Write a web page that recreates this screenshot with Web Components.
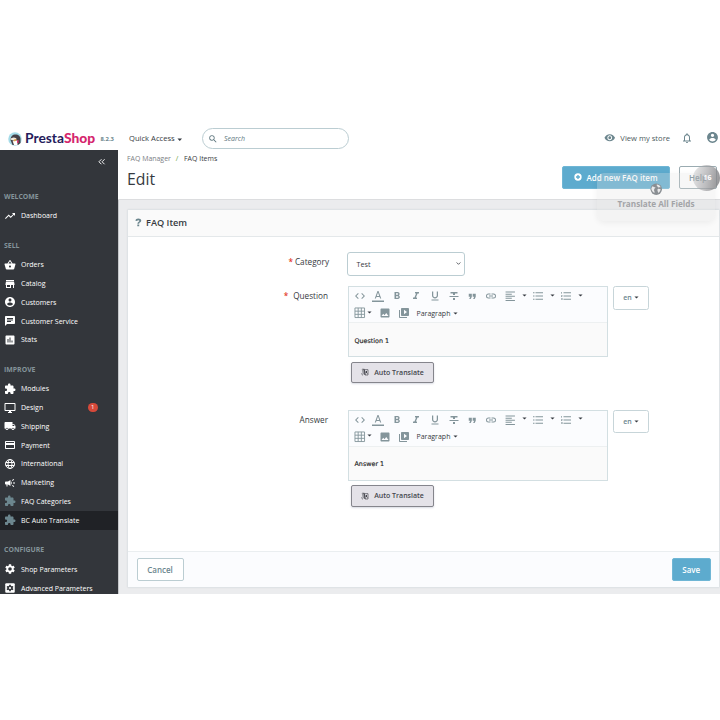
<!DOCTYPE html>
<html lang="en">
<head>
<meta charset="utf-8">
<title>Edit - PrestaShop</title>
<style>
  html, body { margin: 0; height: 100%; background: #fff; overflow: hidden; }
  body { font-family: "Open Sans", "Noto Sans", sans-serif; color: #363a41; }
</style>
</head>
<body>
<bo-app></bo-app>

<script>
const ICONS = {
  trend: '<path d="M16 6l2.29 2.29-4.88 4.88-4-4L2 16.59 3.41 18l6-6 4 4 6.3-6.29L22 12V6z"/>',
  basket: '<path d="M17.21 9l-4.38-6.56c-.19-.28-.51-.42-.83-.42-.32 0-.64.14-.83.43L6.79 9H2c-.55 0-1 .45-1 1 0 .09.01.18.04.27l2.54 9.27c.23.84 1 1.46 1.92 1.46h13c.92 0 1.69-.62 1.93-1.46l2.54-9.27L23 10c0-.55-.45-1-1-1h-4.79zM9 9l3-4.4L15 9H9zm3 8c-1.1 0-2-.9-2-2s.9-2 2-2 2 .9 2 2-.9 2-2 2z"/>',
  store: '<path d="M20 4H4v2h16V4zm1 10v-2l-1-5H4l-1 5v2h1v6h10v-6h4v6h2v-6h1zm-9 4H6v-4h6v4z"/>',
  account: '<path d="M12 2C6.48 2 2 6.48 2 12s4.48 10 10 10 10-4.48 10-10S17.52 2 12 2zm0 3c1.66 0 3 1.34 3 3s-1.34 3-3 3-3-1.34-3-3 1.34-3 3-3zm0 14.2c-2.5 0-4.71-1.28-6-3.22.03-1.99 4-3.08 6-3.08 1.99 0 5.97 1.09 6 3.08-1.29 1.94-3.5 3.22-6 3.22z"/>',
  chat: '<path d="M20 2H4c-1.1 0-1.99.9-1.99 2L2 22l4-4h14c1.1 0 2-.9 2-2V4c0-1.1-.9-2-2-2zM6 9h12v2H6V9zm8 5H6v-2h8v2zm4-6H6V6h12v2z"/>',
  stats: '<path d="M19 3H5c-1.1 0-2 .9-2 2v14c0 1.1.9 2 2 2h14c1.1 0 2-.9 2-2V5c0-1.1-.9-2-2-2zM9 17H7v-7h2v7zm4 0h-2V7h2v10zm4 0h-2v-4h2v4z"/>',
  module: '<path d="M20.5 11H19V7c0-1.1-.9-2-2-2h-4V3.5C13 2.12 11.88 1 10.5 1S8 2.12 8 3.5V5H4c-1.1 0-1.99.9-1.99 2v3.8H3.5c1.49 0 2.7 1.21 2.7 2.7s-1.21 2.7-2.7 2.7H2V20c0 1.1.9 2 2 2h3.8v-1.5c0-1.49 1.21-2.7 2.7-2.7 1.49 0 2.7 1.21 2.7 2.7V22H17c1.1 0 2-.9 2-2v-4h1.5c1.38 0 2.5-1.12 2.5-2.5S21.88 11 20.5 11z"/>',
  desktop: '<path d="M21 2H3c-1.1 0-2 .9-2 2v12c0 1.1.9 2 2 2h7v2H8v2h8v-2h-2v-2h7c1.1 0 2-.9 2-2V4c0-1.1-.9-2-2-2zm0 14H3V4h18v12z"/>',
  truck: '<path d="M20 8h-3V4H3c-1.1 0-2 .9-2 2v11h2c0 1.66 1.34 3 3 3s3-1.34 3-3h6c0 1.66 1.34 3 3 3s3-1.34 3-3h2v-5l-3-4zM6 18.5c-.83 0-1.5-.67-1.5-1.5s.67-1.5 1.5-1.5 1.5.67 1.5 1.5-.67 1.5-1.5 1.5zm13.5-9l1.96 2.5H17V9.5h2.5zm-1.5 9c-.83 0-1.5-.67-1.5-1.5s.67-1.5 1.5-1.5 1.5.67 1.5 1.5-.67 1.5-1.5 1.5z"/>',
  card: '<path d="M20 4H4c-1.11 0-1.99.89-1.99 2L2 18c0 1.11.89 2 2 2h16c1.11 0 2-.89 2-2V6c0-1.11-.89-2-2-2zm0 14H4v-6h16v6zm0-10H4V6h16v2z"/>',
  globe: '<g fill="none" stroke="currentColor" stroke-width="2"><circle cx="12" cy="12" r="9"/><ellipse cx="12" cy="12" rx="4" ry="9"/><path d="M3.5 9h17M3.5 15h17"/></g>',
  campaign: '<path d="M18 11v2h4v-2h-4zm-2 6.61c.96.71 2.21 1.65 3.2 2.39.4-.53.8-1.07 1.2-1.6-.99-.74-2.24-1.68-3.2-2.4-.4.54-.8 1.08-1.2 1.61zM20.4 5.6c-.4-.53-.8-1.07-1.2-1.6-.99.74-2.24 1.68-3.2 2.4.4.53.8 1.07 1.2 1.6.96-.72 2.21-1.65 3.2-2.4zM4 9c-1.1 0-2 .9-2 2v2c0 1.1.9 2 2 2h1v4h2v-4h1l5 3V6L8 9H4zm11.5 3c0-1.33-.58-2.53-1.5-3.35v6.69c.92-.81 1.5-2.01 1.5-3.34z"/>',
  gear: '<path d="M19.14 12.94c.04-.3.06-.61.06-.94s-.02-.64-.07-.94l2.03-1.58a.49.49 0 0 0 .12-.61l-1.92-3.32a.49.49 0 0 0-.59-.22l-2.39.96a7 7 0 0 0-1.62-.94l-.36-2.54a.48.48 0 0 0-.48-.41h-3.84a.47.47 0 0 0-.47.41l-.36 2.54c-.59.24-1.13.57-1.62.94l-2.39-.96a.48.48 0 0 0-.59.22L2.74 8.87a.47.47 0 0 0 .12.61l2.03 1.58a6 6 0 0 0-.02 1.88l-2.03 1.58a.49.49 0 0 0-.12.61l1.92 3.32c.12.22.37.29.59.22l2.39-.96c.5.38 1.03.7 1.62.94l.36 2.54c.05.24.24.41.48.41h3.84c.24 0 .44-.17.47-.41l.36-2.54a7 7 0 0 0 1.62-.94l2.39.96c.22.08.47 0 .59-.22l1.92-3.32a.47.47 0 0 0-.12-.61zM12 15.6a3.6 3.6 0 1 1 0-7.2 3.6 3.6 0 0 1 0 7.2z"/>',
  gearbox: '<rect x="2.5" y="2.500" width="19" height="19" rx="2"/><path fill="#33363b" d="M10.600 5.500h2.800l.5 2 1.600.9 2-.6 1.400 2.400-1.500 1.300v1l1.500 1.400-1.400 2.400-2-.6-1.600.9-.5 2h-2.800l-.5-2-1.600-.9-2 .6-1.400-2.400 1.500-1.400v-1L5.100 10.200l1.400-2.400 2 .6 1.600-.9z"/><circle cx="12" cy="12" r="2.200"/>',
  search: '<path d="M15.500 14h-.790l-.280-.270A6.470 6.470 0 0 0 16 9.500 6.500 6.500 0 1 0 9.500 16c1.610 0 3.090-.590 4.230-1.570l.270.280v.790l5 4.990L20.490 19l-4.990-5zm-6 0C7.010 14 5 11.990 5 9.500S7.010 5 9.500 5 14 7.010 14 9.500 11.990 14 9.500 14z"/>',
  eye: '<path d="M12 4.500C7 4.500 2.730 7.610 1 12c1.730 4.390 6 7.500 11 7.500s9.270-3.110 11-7.500c-1.730-4.390-6-7.500-11-7.500zM12 17c-2.760 0-5-2.240-5-5s2.240-5 5-5 5 2.240 5 5-2.240 5-5 5zm0-8c-1.660 0-3 1.340-3 3s1.340 3 3 3 3-1.340 3-3-1.340-3-3-3z"/>',
  bell: '<path d="M12 22c1.100 0 2-.9 2-2h-4c0 1.100.9 2 2 2zm6-6v-5c0-3.070-1.630-5.640-4.500-6.320V4c0-.830-.670-1.500-1.500-1.500s-1.500.670-1.500 1.500v.680C7.640 5.360 6 7.920 6 11v5l-2 2v1h16v-1l-2-2zm-2 1H8v-6c0-2.480 1.510-4.500 4-4.500s4 2.020 4 4.500v6z"/>',
  plus: '<path fill-rule="evenodd" d="M12 1a11 11 0 1 0 0 22 11 11 0 0 0 0-22zm-2 5h4v4h4v4h-4v4h-4v-4H6v-4h4z"/>',
  collapse: '<path fill="none" stroke="currentColor" stroke-width="3" d="M11 4l-8 8 8 8M21 4l-8 8 8 8"/>',
  code: '<path d="M9.400 16.600L4.800 12l4.600-4.600L8 6l-6 6 6 6 1.400-1.400zm5.200 0l4.600-4.600-4.600-4.600L16 6l6 6-6 6-1.400-1.400z"/>',
  color: '<path d="M0 21h24v2.800H0zM11 2L5.500 17h2.250l1.120-3h6.250l1.120 3h2.250L13 2h-2zm-1.380 10L12 5.200 14.380 12H9.620z"/>',
  bold: '<path d="M15.600 10.790c.970-.670 1.650-1.770 1.650-2.790 0-2.260-1.750-4-4-4H7v14h7.040c2.090 0 3.710-1.700 3.710-3.790 0-1.520-.860-2.820-2.150-3.420zM10 6.500h3c.830 0 1.500.670 1.500 1.500s-.670 1.500-1.500 1.500h-3v-3zm3.500 9H10v-3h3.500c.830 0 1.500.670 1.500 1.500s-.670 1.500-1.500 1.500z"/>',
  italic: '<path d="M10 4v3h2.210l-3.420 8H6v3h8v-3h-2.210l3.420-8H18V4z"/>',
  underline: '<path d="M12 17c3.310 0 6-2.690 6-6V3h-2.500v8c0 1.930-1.570 3.500-3.500 3.500S8.500 12.930 8.500 11V3H6v8c0 3.310 2.690 6 6 6zm-7 2v2h14v-2H5z"/>',
  strike: '<path d="M10 20h4v-4h-4v4zM5 4v3h5v3h4V7h5V4H5zM3 14.200h18v-2.200H3v2.200z"/>',
  quote: '<path d="M4 6h7v7l-2.500 5H5l2.500-5H4zM13 6h7v7l-2.500 5H14l2.500-5H13z"/>',
  link: '<path d="M3.900 12c0-1.710 1.390-3.100 3.100-3.100h4V7H7a5 5 0 0 0 0 10h4v-1.900H7c-1.710 0-3.100-1.390-3.100-3.100zM8 13h8v-2H8v2zm9-6h-4v1.900h4a3.100 3.100 0 0 1 0 6.200h-4V17h4a5 5 0 0 0 0-10z"/>',
  align: '<path d="M15 15H3v2h12v-2zm0-8H3v2h12V7zM3 13h18v-2H3v2zm0 8h18v-2H3v2zM3 3v2h18V3H3z"/>',
  ul: '<path d="M2 4.500h3v2H2zm0 6.500h3v2H2zm0 6.500h3v2H2zM7 4.500h15v2H7zM7 11h15v2H7zm0 6.500h15v2H7z"/>',
  ol: '<path d="M2 17h2v.5H3v1h1v.5H2v1h3v-4H2v1zm1-9h1V4H2v1h1v3zm-1 3h1.800L2 13.100v.9h3v-1H3.200L5 10.900V10H2v1zm5-6.500v2h15v-2H7zm0 15h15v-2H7v2zM7 13h15v-2H7v2z"/>',
  table: '<path fill="none" stroke="currentColor" stroke-width="1.900" d="M2 2h20v20H2zM2 8.700h20M2 15.300h20M8.700 2v20M15.300 2v20"/>',
  image: '<path d="M21 19V5c0-1.100-.9-2-2-2H5c-1.100 0-2 .9-2 2v14c0 1.100.9 2 2 2h14c1.100 0 2-.9 2-2zM8.500 13.500l2.500 3.010L14.500 12l4.500 6H5l3.500-4.500z"/>',
  video: '<path d="M4 6H2v14c0 1.100.9 2 2 2h14v-2H4V6zm16-4H8c-1.100 0-2 .9-2 2v12c0 1.100.9 2 2 2h12c1.100 0 2-.9 2-2V4c0-1.100-.9-2-2-2zm-8 12.500v-9l6 4.500-6 4.500z"/>',
  caret: '<path d="M2 7h20l-10 10z"/>',
  chevron: '<path fill="none" stroke="currentColor" stroke-width="3.800" d="M3 7l9 9 9-9"/>',
  help: '<path d="M4 7.500C4.500 3.500 7.500 1.500 12 1.500c5 0 8.500 2.500 8.500 6.500 0 5-6 4.500-6 8H9.500c0-5 5.500-5 5.500-7.800 0-1.400-1-2.200-2.800-2.200-2 0-3 1-3.500 2.500zM9.300 18h5.400v5H9.300z"/>',
  translate: '<path opacity=".45" d="M2 3l9-1 3 19-9-3z"/><path fill="none" stroke="currentColor" stroke-width="2" d="M10 5h11v16H12zM5 3l5 2 2 16M2 16c0 3 1 5 4 5"/><path d="M14 9h4v6h-4z"/><path fill="none" stroke="currentColor" stroke-width="1.500" d="M17 14l3 4"/>',
  earth: '<circle cx="12" cy="12" r="11"/><path fill="#e9e9ea" d="M4 6.500c3 0 4 1.500 6.500 1.500-.5 2-3 2.500-2.500 5-1 2 1.500 3 .5 6C5.500 17.500 3 14 2.500 11zM13 3c3.500 0 6 2 7.500 5-2 1-3.500-.5-4.500 1-1.500-.5-1-2.500-3-3.500zM14.500 12c2-1.500 4-.5 6 0-.5 3-2 5.500-4.500 7-.5-2.500-2.500-4-1.500-7z"/>'
};

// shared helper: fills the open shadow root
class Base extends HTMLElement {
  connectedCallback() {
    if (this.shadowRoot) return;
    this.attachShadow({ mode: 'open' });
    this.shadowRoot.innerHTML = `<style>${this.styles()}</style>${this.render()}`;
  }
  styles() { return ':host { display: block; }'; }
  render() { return '<slot></slot>'; }
}

class BoIcon extends Base {
  styles() {
    const size = this.getAttribute('size') || 12;
    return `
      :host { display: inline-flex; flex: none; width: ${size}px; height: ${size}px; }
      svg { width: 100%; height: 100%; fill: currentColor; overflow: visible; }
    `;
  }
  render() {
    return `<svg viewBox="0 0 24 24">${ICONS[this.getAttribute('name')]}</svg>`;
  }
}

class BoHeader extends Base {
  styles() {
    return `
      :host {
        display: flex; align-items: center; height: 21.5px; box-sizing: border-box;
        padding-left: 8px; background: #fff; white-space: nowrap; font-size: 7.6px;
      }
      .logo { width: 14px; height: 14px; margin-right: 3px; flex: none; }
      .brand { font: 700 13.8px/18px Lato, sans-serif; color: #251b5b; width: 75.5px; padding-bottom: 1px; }
      .brand b { color: #d5266d; }
      .version { font-size: 5.9px; font-weight: 700; color: #6c868e; width: 28.5px; line-height: 20px; padding-top: 1px; }
      .quick, .view { line-height: 18px; padding-bottom: 1.5px; }
      .quick { width: 72.5px; }
      .quick bo-icon { margin-left: 2.5px; vertical-align: -1px; }
      .search {
        display: flex; align-items: center; box-sizing: border-box; width: 147px; height: 21px;
        border: 1px solid #bbcdd2; border-radius: 11px; padding-left: 5px;
        font-size: 7px; font-style: italic; color: #5e767e;
      }
      .search bo-icon { margin-right: 6.500px; }
      .right { display: flex; align-items: center; margin-left: auto; padding-right: 1px; color: #6c868e; }
      .view { color: #4d5b60; margin: 0 11px 0 5px; }
      .eye { margin-bottom: 2px; }
      .bell { margin-right: 13px; margin-bottom: 2px; }
      .user { margin-bottom: 2px; }
    `;
  }
  render() {
    return `
      <svg class="logo" viewBox="0 0 28 28">
        <circle cx="14" cy="14" r="13.5" fill="#a4dbe8"/>
        <path d="M5 16c0-7 4-11 10-11 6 0 10 4 10 9v8l-5 4H9z" fill="#454047"/>
        <path d="M4 14c4-3 8-4 13-1l-2 3H7z" fill="#f1e9dd"/>
        <path d="M9 17h10v9h-7z" fill="#fff"/>
        <path d="M18 17l3-1v6h-3z" fill="#df3a75"/>
        <path d="M12 15l6-1-3 4-4 1z" fill="#e5a54b"/>
      </svg>
      <span class="brand">Presta<b>Shop</b></span>
      <span class="version">8.2.3</span>
      <span class="quick">Quick Access<bo-icon name="caret" size="5.5"></bo-icon></span>
      <div class="search"><bo-icon name="search" size="10"></bo-icon>Search</div>
      <div class="right">
        <bo-icon class="eye" name="eye" size="11.5"></bo-icon>
        <span class="view">View my store</span>
        <bo-icon class="bell" name="bell" size="12"></bo-icon>
        <bo-icon class="user" name="account" size="13"></bo-icon>
      </div>
    `;
  }
}

class BoNavItem extends Base {
  styles() {
    return `
      :host {
        display: flex; align-items: center; height: 18.75px; padding-left: 3.5px;
        font-size: 7px; font-weight: 500; color: #fff; white-space: nowrap;
      }
      :host([active]) { background: #202226; }
      bo-icon { margin-right: 5.5px; }
      :host([muted]) bo-icon { color: #6c868e; }
      .badge {
        margin-left: auto; margin-right: 20.5px; width: 9.5px; height: 9.5px; border-radius: 50%;
        background: #d6493a; font-size: 6px; line-height: 9.5px; text-align: center;
      }
    `;
  }
  render() {
    const badge = this.getAttribute('badge');
    return `
      <bo-icon name="${this.getAttribute('icon')}"></bo-icon><slot></slot>
      ${badge ? `<span class="badge">${badge}</span>` : ''}
    `;
  }
}

class BoNavGroup extends Base {
  styles() {
    return `
      :host { display: block; margin-bottom: 10.8px; }
      .title {
        height: 19.6px; line-height: 19.6px; padding-left: 4px;
        font-size: 6.9px; font-weight: 700; color: #84949a;
      }
    `;
  }
  render() {
    return `<div class="title">${this.getAttribute('label')}</div><slot></slot>`;
  }
}

class BoSidebar extends Base {
  styles() {
    return `
      :host {
        display: block; width: 118px; flex: none; box-sizing: border-box;
        background: #33363b; overflow: hidden;
      }
      .toggle { display: flex; justify-content: flex-end; height: 25.5px; padding: 8px 12.5px 0 0; box-sizing: border-box; color: #fff; }
      .groups { padding-top: 11.7px; }
    `;
  }
  render() {
    return `
      <div class="toggle"><bo-icon name="collapse" size="7.500"></bo-icon></div>
      <div class="groups">
        <bo-nav-group label="WELCOME">
          <bo-nav-item icon="trend">Dashboard</bo-nav-item>
        </bo-nav-group>
        <bo-nav-group label="SELL">
          <bo-nav-item icon="basket">Orders</bo-nav-item>
          <bo-nav-item icon="store">Catalog</bo-nav-item>
          <bo-nav-item icon="account">Customers</bo-nav-item>
          <bo-nav-item icon="chat">Customer Service</bo-nav-item>
          <bo-nav-item icon="stats">Stats</bo-nav-item>
        </bo-nav-group>
        <bo-nav-group label="IMPROVE">
          <bo-nav-item icon="module">Modules</bo-nav-item>
          <bo-nav-item icon="desktop" badge="1">Design</bo-nav-item>
          <bo-nav-item icon="truck">Shipping</bo-nav-item>
          <bo-nav-item icon="card">Payment</bo-nav-item>
          <bo-nav-item icon="globe">International</bo-nav-item>
          <bo-nav-item icon="campaign">Marketing</bo-nav-item>
          <bo-nav-item icon="module" muted>FAQ Categories</bo-nav-item>
          <bo-nav-item icon="module" muted active>BC Auto Translate</bo-nav-item>
        </bo-nav-group>
        <bo-nav-group label="CONFIGURE">
          <bo-nav-item icon="gear">Shop Parameters</bo-nav-item>
          <bo-nav-item icon="gearbox">Advanced Parameters</bo-nav-item>
        </bo-nav-group>
      </div>
    `;
  }
}

class BoButton extends Base {
  styles() {
    return `
      :host {
        display: inline-flex; align-items: center; justify-content: center; flex: none;
        box-sizing: border-box; height: 23px; border: 1px solid #bbcdd2; border-radius: 2px;
        background: #fff; color: #6c868e; font-size: 8px; font-weight: 600; white-space: nowrap;
      }
      :host([kind="primary"]) { background: #5dabce; border-color: #6fb6d5; color: #fff; }
      :host([kind="translate"]) {
        width: 83px; height: 21.5px; background: #e4e2e8; border-color: #85858c; color: #45464d;
        font-size: 7px; box-shadow: 0 1px 2px rgba(60, 70, 110, .2);
      }
    `;
  }
}

class BoPageHead extends Base {
  styles() {
    return `
      :host {
        display: flex; justify-content: space-between; box-sizing: border-box; height: 50px;
        padding: 0 3px 0 9px; background: #fff; border-bottom: 1px solid #dcdddf;
      }
      .crumbs { font-size: 6.95px; line-height: 10px; margin-top: 4px; color: #7b7e83; white-space: nowrap; }
      .crumbs i { font-style: normal; color: #69a23c; margin: 0 4px 0 3px; }
      .crumbs b { font-weight: 400; color: #363a41; }
      h1 { margin: 4px 0 0; font-size: 15.8px; line-height: 22px; font-weight: 400; }
      .actions { display: flex; padding-top: 16px; }
      .add { width: 108px; margin-right: 9px; }
      .add bo-icon { margin-right: 4px; }
      .help { width: 38px; border-color: #9aabb1; }
    `;
  }
  render() {
    return `
      <div>
        <div class="crumbs">FAQ Manager <i>/</i> <b>FAQ Items</b></div>
        <h1>Edit</h1>
      </div>
      <div class="actions">
        <bo-button class="add" kind="primary"><bo-icon name="plus" size="8"></bo-icon>Add new FAQ item</bo-button>
        <bo-button class="help">Help</bo-button>
      </div>
    `;
  }
}

class BoFormRow extends Base {
  styles() {
    return `
      :host { display: flex; align-items: flex-start; }
      .label {
        width: 201px; flex: none; box-sizing: border-box; padding: 4px var(--label-inset, 0) 0 0;
        text-align: right; font-size: 8.2px; line-height: 12px; white-space: nowrap;
      }
      .label i { font-style: normal; font-weight: 600; color: #e33b2e; margin-right: var(--mark-gap, 2px); }
    `;
  }
  render() {
    const mark = this.hasAttribute('required') ? '<i>*</i>' : '';
    return `<div class="label">${mark}${this.getAttribute('label')}</div><slot></slot>`;
  }
}

class BoSelect extends Base {
  styles() {
    return `
      :host {
        display: flex; align-items: center; justify-content: space-between; box-sizing: border-box;
        width: 118px; height: 23.5px; border: 1px solid #bbcdd2; border-radius: 3px;
        padding: 0 3px 0 9px; font-size: 7.2px;
      }
    `;
  }
  render() {
    return '<slot></slot><bo-icon name="chevron" size="5"></bo-icon>';
  }
}

class BoEditor extends Base {
  styles() {
    return `
      :host { display: block; }
      .box { width: 260px; height: 71px; box-sizing: border-box; border: 1px solid #d3dfe2; display: flex; flex-direction: column; }
      .bar { box-sizing: border-box; height: 36px; padding: 1px 0 0 1.2px; background: #fbfcfe; border-bottom: 1px solid #edf0f1; flex: none; }
      .row { display: flex; height: 16.7px; align-items: center; color: #84959b; }
      .btn { display: flex; width: 18.8px; height: 16px; align-items: center; justify-content: center; flex: none; }
      .drop { width: 9.4px; color: #363a41; padding-bottom: 2px; box-sizing: border-box; }
      .drop.tight { width: 6.4px; padding-right: 5px; }
      .para { font-size: 7px; color: #363a41; margin: 0 3px 0 3.5px; }
      .caret { color: #363a41; }
      .text {
        flex: 1; background: #fafafa; display: flex; align-items: center; padding: 2px 0 0 5.5px;
        font: 6.4px "DejaVu Sans", sans-serif; color: #222; -webkit-text-stroke: .15px #222;
      }
      bo-button { margin: 4.5px 0 0 3px; }
      bo-button bo-icon { margin-right: 5px; }
    `;
  }
  render() {
    const btn = (name, size = 12) => `<span class="btn"><bo-icon name="${name}" size="${size}"></bo-icon></span>`;
    const drop = '<span class="btn drop"><bo-icon name="caret" size="5"></bo-icon></span>';
    return `
      <div class="box">
        <div class="bar">
          <div class="row">
            ${btn('code')}${btn('color')}${btn('bold')}${btn('italic')}${btn('underline')}
            ${btn('strike')}${btn('quote', 10.5)}${btn('link')}
            ${btn('align', 12.5)}${drop}${btn('ul')}${drop}${btn('ol')}${drop}
          </div>
          <div class="row">
            ${btn('table', 11.5)}<span class="btn drop tight"><bo-icon name="caret" size="5"></bo-icon></span>
            ${btn('image')}${btn('video')}
            <span class="para">Paragraph</span><bo-icon class="caret" name="caret" size="5"></bo-icon>
          </div>
        </div>
        <div class="text"><slot></slot></div>
      </div>
      <bo-button kind="translate"><bo-icon name="translate" size="8"></bo-icon>Auto Translate</bo-button>
    `;
  }
}

class BoLang extends Base {
  styles() {
    return `
      :host {
        display: flex; align-items: center; justify-content: center; box-sizing: border-box;
        width: 36px; height: 23.5px; border: 1px solid #c7d5d9; border-radius: 2.5px;
        font-size: 7px; font-weight: 600; color: #6c868e;
      }
      bo-icon { margin-left: 2px; color: #363a41; }
    `;
  }
  render() {
    return '<slot></slot><bo-icon name="caret" size="5"></bo-icon>';
  }
}

class BoPanel extends Base {
  styles() {
    return `
      :host {
        display: flex; flex-direction: column; box-sizing: border-box; height: 379px;
        background: #fff; border: 1px solid #dfe3e6; border-radius: 2px; box-shadow: 0 0 2px rgba(0, 0, 0, .06);
      }
      .head {
        display: flex; align-items: center; box-sizing: border-box; height: 27px; flex: none; padding-left: 5.5px;
        background: #fafafa; border-bottom: 1px solid #e4e8ea; font-size: 9.2px; font-weight: 600;
      }
      .head bo-icon { color: #6c868e; margin-right: 4px; }
      .body { flex: 1; }
      .foot {
        display: flex; align-items: center; justify-content: space-between; box-sizing: border-box;
        height: 35.5px; flex: none; padding: 0 8px 0 8.500px; background: #fbfcfe; border-top: 1px solid #eaeef0;
      }
    `;
  }
  render() {
    return `
      <div class="head"><bo-icon name="help" size="8.5"></bo-icon>${this.getAttribute('label')}</div>
      <div class="body"><slot></slot></div>
      <div class="foot"><slot name="footer"></slot></div>
    `;
  }
}

// floating tile that sits over the page head
class BoTranslateAll extends Base {
  styles() {
    return `
      :host {
        display: flex; flex-direction: column; align-items: center; box-sizing: border-box;
        width: 118px; height: 47.5px; padding-top: 9.5px; border-radius: 7px;
        background: rgba(225, 226, 228, .28); box-shadow: 0 2px 6px rgba(0, 0, 0, .06);
        font-size: 8.2px; line-height: 12px; font-weight: 700; color: #a3a4a7; white-space: nowrap;
      }
      bo-icon { color: #8a8f93; margin-bottom: 3px; }
      .count {
        position: absolute; right: -5px; top: -8px; width: 27px; height: 26px; border-radius: 50%;
        background: linear-gradient(100deg, rgba(190, 190, 192, .3), rgba(160, 160, 163, .65) 50%, rgba(130, 130, 133, .9));
        color: #fff; font-size: 7px; line-height: 26px; text-align: center; box-sizing: border-box; padding-left: 2px;
      }
    `;
  }
  render() {
    return '<bo-icon name="earth" size="12.500"></bo-icon><slot></slot><span class="count">16</span>';
  }
}

class BoApp extends Base {
  styles() {
    return `
      :host { display: flex; flex-direction: column; width: 720px; height: 594px; padding-top: 128px; box-sizing: border-box; position: relative; }
      .main { display: flex; flex: 1; min-height: 0; }
      .content { flex: 1; min-width: 0; background: #ebecee; border-left: 1px solid #c5c7ca; margin-right: 0; }
      bo-page-head { margin-left: -1px; }
      bo-panel { margin: 9px .5px 0 8px; }
      .category { margin-top: 15.500px; --mark-gap: 2px; }
      .question { margin-top: 10.5px; --mark-gap: 5px; --label-inset: 1px; }
      .answer { margin-top: 26.5px; --label-inset: 1px; }
      bo-select { margin-left: 17.5px; }
      bo-editor { margin-left: 19px; }
      bo-lang { margin-left: 5px; }
      .cancel { width: 47px; }
      .save { width: 38.5px; }
      bo-translate-all { position: absolute; left: 597px; top: 173px; }
    `;
  }
  render() {
    return `
      <bo-header></bo-header>
      <div class="main">
        <bo-sidebar></bo-sidebar>
        <div class="content">
          <bo-page-head></bo-page-head>
          <bo-panel label="FAQ Item">
            <bo-form-row class="category" label="Category" required>
              <bo-select>Test</bo-select>
            </bo-form-row>
            <bo-form-row class="question" label="Question" required>
              <bo-editor>Question 1</bo-editor>
              <bo-lang>en</bo-lang>
            </bo-form-row>
            <bo-form-row class="answer" label="Answer">
              <bo-editor>Answer 1</bo-editor>
              <bo-lang>en</bo-lang>
            </bo-form-row>
            <bo-button slot="footer" class="cancel">Cancel</bo-button>
            <bo-button slot="footer" class="save" kind="primary">Save</bo-button>
          </bo-panel>
        </div>
      </div>
      <bo-translate-all>Translate All Fields</bo-translate-all>
    `;
  }
}

customElements.define('bo-icon', BoIcon);
customElements.define('bo-header', BoHeader);
customElements.define('bo-nav-item', BoNavItem);
customElements.define('bo-nav-group', BoNavGroup);
customElements.define('bo-sidebar', BoSidebar);
customElements.define('bo-button', BoButton);
customElements.define('bo-page-head', BoPageHead);
customElements.define('bo-form-row', BoFormRow);
customElements.define('bo-select', BoSelect);
customElements.define('bo-editor', BoEditor);
customElements.define('bo-lang', BoLang);
customElements.define('bo-panel', BoPanel);
customElements.define('bo-translate-all', BoTranslateAll);
customElements.define('bo-app', BoApp);
</script>
</body>
</html>
